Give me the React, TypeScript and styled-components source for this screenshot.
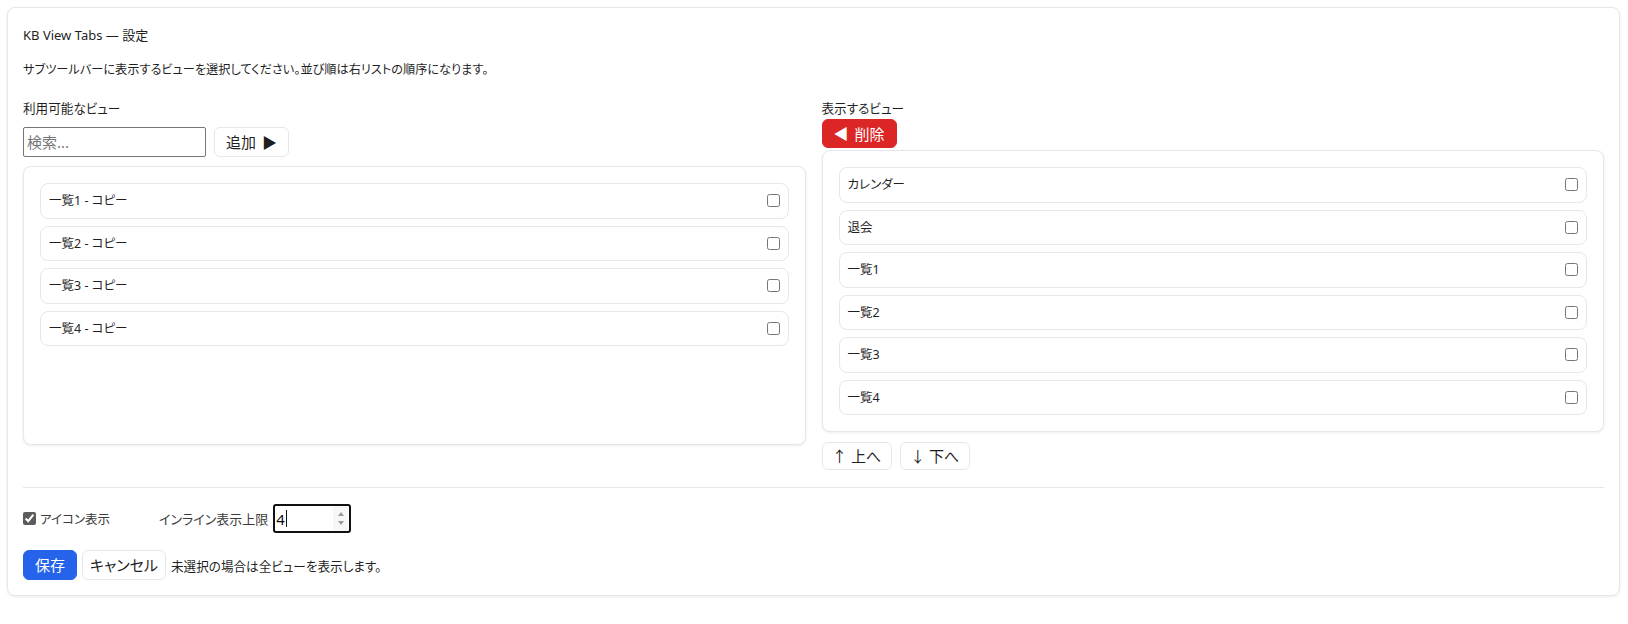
import React from "react";
import styled, { createGlobalStyle } from "styled-components";

const GlobalStyle = createGlobalStyle`
  html, body { margin: 0; padding: 0; background: #ffffff; }
  body {
    font-family: "Noto Sans", "Noto Sans CJK JP", sans-serif;
    font-feature-settings: "palt";
    color: #1f1f1f;
    font-size: 13px;
  }
  * { box-sizing: border-box; }
`;

const Page = styled.div`
  padding: 7px 8px 7px 7px;
`;

const Card = styled.section`
  border: 1px solid #e5e7eb;
  border-radius: 8px;
  box-shadow: 0 1px 3px rgba(0, 0, 0, 0.08);
  padding: 16px 15px 15px 15px;
  background: #fff;
`;

const Title = styled.div`
  font-size: 13px;
  line-height: 22px;
`;

const Description = styled.p`
  margin: 14px 0 0;
  font-size: 12.2px;
  line-height: 20px;
`;

const Columns = styled.div`
  display: grid;
  grid-template-columns: 1fr 1fr;
  column-gap: 16px;
  margin-top: 19px;
  align-items: start;
`;

const Column = styled.div`
  display: flex;
  flex-direction: column;
  align-items: flex-start;
  min-width: 0;
`;

const ColumnLabel = styled.div`
  font-size: 12.6px;
  line-height: 20px;
`;

const Toolbar = styled.div<{ $top: number; $bottom: number }>`
  display: flex;
  align-items: stretch;
  gap: 8px;
  margin-top: ${(p) => p.$top}px;
  margin-bottom: ${(p) => p.$bottom}px;
`;

const SearchInput = styled.input`
  width: 183px;
  height: 30px;
  border: 1px solid #767676;
  border-radius: 2px;
  padding: 0 3px;
  font-family: inherit;
  font-size: 15px;
  color: #222;
  &::placeholder { color: #767676; }
`;

const Button = styled.button<{ $variant?: "default" | "danger" | "primary"; $h?: number; $px?: number }>`
  display: inline-flex;
  align-items: center;
  justify-content: center;
  gap: 6px;
  height: ${(p) => p.$h ?? 28}px;
  padding: 0 ${(p) => p.$px ?? 11}px;
  border-radius: 6px;
  font-family: inherit;
  font-feature-settings: "palt";
  font-size: 15px;
  line-height: 20px;
  cursor: pointer;
  border: 1px solid
    ${(p) =>
      p.$variant === "danger" ? "#dc2626" : p.$variant === "primary" ? "#2563eb" : "#e5e7eb"};
  background: ${(p) =>
    p.$variant === "danger" ? "#dc2626" : p.$variant === "primary" ? "#2563eb" : "#ffffff"};
  color: ${(p) => (p.$variant === "danger" || p.$variant === "primary" ? "#ffffff" : "#1f1f1f")};
`;

const Tri = styled.span`
  font-size: 15px;
  line-height: 1;
`;

const Panel = styled.div<{ $minHeight?: number; $top: number }>`
  align-self: stretch;
  margin-top: ${(p) => p.$top}px;
  min-height: ${(p) => p.$minHeight ?? 0}px;
  border: 1px solid #e5e7eb;
  border-radius: 8px;
  box-shadow: 0 1px 3px rgba(0, 0, 0, 0.08);
  padding: 16px;
  display: flex;
  flex-direction: column;
  gap: 7px;
  background: #fff;
`;

const Item = styled.label`
  display: flex;
  align-items: center;
  justify-content: space-between;
  height: 35.5px;
  padding: 0 8px;
  border: 1px solid #e5e7eb;
  border-radius: 8px;
  font-size: 12.5px;
  line-height: 19.5px;
  background: #fff;
`;

const ItemCheck = styled.input`
  width: 13px;
  height: 13px;
  margin: 0;
`;

const MoveRow = styled.div`
  display: flex;
  gap: 8px;
  margin-top: 10px;
`;

const Divider = styled.hr`
  border: 0;
  border-top: 1px solid #e5e7eb;
  margin: 17px 0 0;
`;

const Options = styled.div`
  display: flex;
  align-items: center;
  margin-top: 16px;
  height: 29px;
`;

const CheckLabel = styled.label`
  display: inline-flex;
  align-items: center;
  gap: 4px;
  font-size: 12.5px;
  color: #3b3b3b;
`;

const IconCheck = styled.input`
  width: 13px;
  height: 13px;
  margin: 0;
  accent-color: #5c5c5c;
`;

const LimitLabel = styled.label`
  display: inline-flex;
  align-items: center;
  gap: 5px;
  margin-left: 49px;
  font-size: 13px;
  color: #3b3b3b;
`;

const NumberBox = styled.span`
  display: inline-flex;
  align-items: stretch;
  width: 78px;
  height: 29px;
  border: 2px solid #111;
  border-radius: 3px;
  background: #fff;
`;

const NumberInput = styled.input`
  flex: 1;
  min-width: 0;
  border: 0;
  outline: none;
  padding: 0 0 0 1px;
  font-family: "Noto Sans", sans-serif;
  font-size: 15px;
  color: #111;
  background: transparent;
`;

const Caret = styled.span`
  align-self: center;
  width: 1px;
  height: 17px;
  background: #111;
  margin-left: -47px;
  margin-right: 46px;
`;

const Spinner = styled.span`
  display: flex;
  flex-direction: column;
  justify-content: center;
  align-items: center;
  gap: 5px;
  width: 15px;
  background: #f7f7f7;
  margin-right: 1px;
`;

const Arrow = styled.span<{ $dir: "up" | "down" }>`
  width: 0;
  height: 0;
  border-left: 3.5px solid transparent;
  border-right: 3.5px solid transparent;
  ${(p) => (p.$dir === "up" ? "border-bottom: 4px solid #9a9a9a;" : "border-top: 4px solid #9a9a9a;")}
`;

const Actions = styled.div`
  display: flex;
  align-items: center;
  gap: 5px;
  margin-top: 17px;
`;

const Note = styled.span`
  font-size: 12.6px;
  color: #1f1f1f;
`;

const available = ["一覧1 - コピー", "一覧2 - コピー", "一覧3 - コピー", "一覧4 - コピー"];
const shown = ["カレンダー", "退会", "一覧1", "一覧2", "一覧3", "一覧4"];

export default function App() {
  return (
    <>
      <GlobalStyle />
      <Page>
        <Card>
          <Title>KB View Tabs — 設定</Title>
          <Description>
            サブツールバーに表示するビューを選択してください。並び順は右リストの順序になります。
          </Description>
          <Columns>
            <Column>
              <ColumnLabel>利用可能なビュー</ColumnLabel>
              <Toolbar $top={8} $bottom={0}>
                <SearchInput placeholder="検索..." />
                <Button $h={30}>
                  追加 <Tri>▶</Tri>
                </Button>
              </Toolbar>
              <Panel $top={9} $minHeight={279}>
                {available.map((name) => (
                  <Item key={name}>
                    <span>{name}</span>
                    <ItemCheck type="checkbox" />
                  </Item>
                ))}
              </Panel>
            </Column>
            <Column>
              <ColumnLabel>表示するビュー</ColumnLabel>
              <Toolbar $top={0} $bottom={0}>
                <Button $variant="danger" $h={29}>
                  <Tri>◀</Tri> 削除
                </Button>
              </Toolbar>
              <Panel $top={2}>
                {shown.map((name) => (
                  <Item key={name}>
                    <span>{name}</span>
                    <ItemCheck type="checkbox" />
                  </Item>
                ))}
              </Panel>
              <MoveRow>
                <Button $px={9.5}>↑ 上へ</Button>
                <Button $px={9.5}>↓ 下へ</Button>
              </MoveRow>
            </Column>
          </Columns>
          <Divider />
          <Options>
            <CheckLabel>
              <IconCheck type="checkbox" defaultChecked />
              アイコン表示
            </CheckLabel>
            <LimitLabel>
              インライン表示上限
              <NumberBox>
                <NumberInput type="text" defaultValue="4" />
                <Caret />
                <Spinner>
                  <Arrow $dir="up" />
                  <Arrow $dir="down" />
                </Spinner>
              </NumberBox>
            </LimitLabel>
          </Options>
          <Actions>
            <Button $variant="primary" $h={30} $px={11}>保存</Button>
            <Button $h={30} $px={7}>キャンセル</Button>
            <Note>未選択の場合は全ビューを表示します。</Note>
          </Actions>
        </Card>
      </Page>
    </>
  );
}
